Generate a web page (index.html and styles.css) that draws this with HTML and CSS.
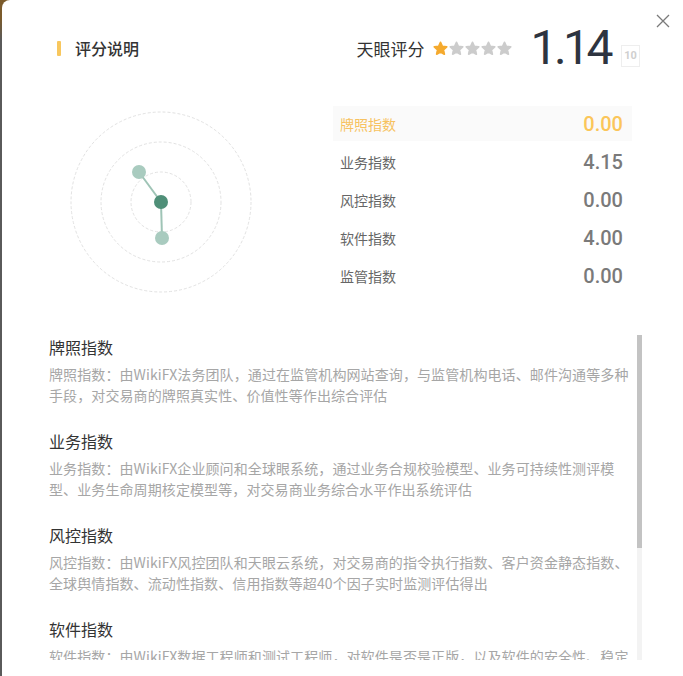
FILE: index.html
```html
<!DOCTYPE html>
<html lang="zh-CN">
<head>
<meta charset="utf-8">
<title>评分说明</title>
<link rel="stylesheet" href="styles.css">
</head>
<body>
<div class="modal">
  <button class="close" aria-label="关闭">
    <svg width="14" height="14" viewBox="0 0 14 14"><path d="M1 1 L13 13 M13 1 L1 13" stroke="#7a7a7a" stroke-width="1.3" fill="none"/></svg>
  </button>
  <div class="header">
    <div class="title"><span class="bar"></span>评分说明</div>
    <div class="score">
      <span class="score-label">天眼评分</span>
      <span class="stars">
        <svg class="star on" viewBox="0 0 14 14"><path d="M7 1.3 L8.7 5 L12.8 5.4 L9.7 8.2 L10.6 12.3 L7 10.2 L3.4 12.3 L4.3 8.2 L1.2 5.4 L5.3 5 Z"/></svg>
        <svg class="star" viewBox="0 0 14 14"><path d="M7 1.3 L8.7 5 L12.8 5.4 L9.7 8.2 L10.6 12.3 L7 10.2 L3.4 12.3 L4.3 8.2 L1.2 5.4 L5.3 5 Z"/></svg>
        <svg class="star" viewBox="0 0 14 14"><path d="M7 1.3 L8.7 5 L12.8 5.4 L9.7 8.2 L10.6 12.3 L7 10.2 L3.4 12.3 L4.3 8.2 L1.2 5.4 L5.3 5 Z"/></svg>
        <svg class="star" viewBox="0 0 14 14"><path d="M7 1.3 L8.7 5 L12.8 5.4 L9.7 8.2 L10.6 12.3 L7 10.2 L3.4 12.3 L4.3 8.2 L1.2 5.4 L5.3 5 Z"/></svg>
        <svg class="star" viewBox="0 0 14 14"><path d="M7 1.3 L8.7 5 L12.8 5.4 L9.7 8.2 L10.6 12.3 L7 10.2 L3.4 12.3 L4.3 8.2 L1.2 5.4 L5.3 5 Z"/></svg>
      </span>
      <span class="big">1.14</span>
      <span class="max">10</span>
    </div>
  </div>

  <div class="top">
    <svg class="radar" width="184" height="184" viewBox="0 0 184 184">
      <circle cx="92" cy="92" r="90" fill="none" stroke="#e2e2e2" stroke-width="1" stroke-dasharray="3 2"/>
      <circle cx="92" cy="92" r="60" fill="none" stroke="#e2e2e2" stroke-width="1" stroke-dasharray="3 2"/>
      <circle cx="92" cy="92" r="30" fill="none" stroke="#e2e2e2" stroke-width="1" stroke-dasharray="3 2"/>
      <line x1="92" y1="92" x2="70" y2="62" stroke="#9fc4b6" stroke-width="2"/>
      <line x1="92" y1="92" x2="93" y2="128" stroke="#9fc4b6" stroke-width="2"/>
      <circle cx="70" cy="62" r="7" fill="#a9cbbf"/>
      <circle cx="93" cy="128" r="7" fill="#a9cbbf"/>
      <circle cx="92" cy="92" r="7" fill="#4f8f78"/>
    </svg>
    <ul class="index-list">
      <li class="row active"><span class="lbl">牌照指数</span><span class="val">0.00</span></li>
      <li class="row"><span class="lbl">业务指数</span><span class="val">4.15</span></li>
      <li class="row"><span class="lbl">风控指数</span><span class="val">0.00</span></li>
      <li class="row"><span class="lbl">软件指数</span><span class="val">4.00</span></li>
      <li class="row"><span class="lbl">监管指数</span><span class="val">0.00</span></li>
    </ul>
  </div>

  <div class="desc-wrap">
    <div class="desc">
      <div class="sec">
        <h3>牌照指数</h3>
        <p>牌照指数：由WikiFX法务团队，通过在监管机构网站查询，与监管机构电话、邮件沟通等多种手段，对交易商的牌照真实性、价值性等作出综合评估</p>
      </div>
      <div class="sec">
        <h3>业务指数</h3>
        <p>业务指数：由WikiFX企业顾问和全球眼系统，通过业务合规校验模型、业务可持续性测评模型、业务生命周期核定模型等，对交易商业务综合水平作出系统评估</p>
      </div>
      <div class="sec">
        <h3>风控指数</h3>
        <p>风控指数：由WikiFX风控团队和天眼云系统，对交易商的指令执行指数、客户资金静态指数、全球舆情指数、流动性指数、信用指数等超40个因子实时监测评估得出</p>
      </div>
      <div class="sec">
        <h3>软件指数</h3>
        <p>软件指数：由WikiFX数据工程师和测试工程师，对软件是否是正版，以及软件的安全性、稳定性、流畅性等进行测试评估得出</p>
      </div>
      <div class="sec">
        <h3>监管指数</h3>
        <p>监管指数：由WikiFX监管团队，根据交易商所持牌照的监管机构级别、监管状态及合规情况等作出综合评估</p>
      </div>
    </div>
    <div class="track"><div class="thumb"></div></div>
  </div>
</div>
</body>
</html>
```

FILE: styles.css
```css
html, body {
  margin: 0;
  padding: 0;
  height: 100%;
  overflow: hidden;
}
body {
  background: linear-gradient(to bottom, #7b5b2b 0, #7b5b2b 18px, #5a5a5a 40px, #5a5a5a 100%);
  font-family: "Noto Sans CJK SC", "Noto Sans", sans-serif;
}
.modal {
  position: relative;
  margin-left: 2px;
  width: 681px;
  height: 720px;
  background: #fff;
  border-top-left-radius: 8px;
}
.close {
  position: absolute;
  top: 14px;
  right: 13px;
  width: 14px;
  height: 14px;
  padding: 0;
  border: 0;
  background: none;
  cursor: pointer;
}
.close svg { display: block; }

.header {
  display: flex;
  align-items: center;
  height: 48px;
  padding: 24px 43px 0 55px;
}
.title {
  display: flex;
  align-items: center;
  font-size: 16px;
  font-weight: 500;
  color: #333;
}
.bar {
  width: 4px;
  height: 15px;
  background: #f8c75e;
  border-radius: 1px;
  margin-right: 14px;
}
.score {
  margin-left: auto;
  display: flex;
  align-items: center;
}
.score-label {
  font-size: 17px;
  color: #333;
}
.stars {
  display: flex;
  gap: 1px;
  margin-left: 9px;
}
.star {
  width: 15px;
  height: 15px;
  fill: #cccccc;
  stroke: #cccccc;
  stroke-width: 1.6;
  stroke-linejoin: round;
}
.star.on { fill: #f5aa2e; stroke: #f5aa2e; }
.big {
  margin-left: 18px;
  font-family: "Roboto", sans-serif;
  font-size: 48px;
  line-height: 50px;
  color: #2e3440;
  letter-spacing: -3.5px;
}
.max {
  align-self: flex-end;
  margin-left: 11px;
  margin-bottom: 6px;
  width: 17px;
  height: 20px;
  border: 1px solid #eeeeee;
  font-family: "Roboto", sans-serif;
  font-size: 11px;
  font-weight: 700;
  line-height: 20px;
  text-align: center;
  color: #cfcfcf;
}

.top {
  display: flex;
  margin-top: 34px;
  padding-left: 67px;
}
.radar {
  display: block;
  margin-top: 4px;
  flex: none;
}
.index-list {
  list-style: none;
  margin: 0 0 0 80px;
  padding: 0;
  width: 299px;
  display: flex;
  flex-direction: column;
  gap: 3px;
}
.row {
  height: 35px;
  display: flex;
  align-items: center;
  justify-content: space-between;
  padding: 0 9px 0 7px;
}
.row.active { background: #fafafa; }
.lbl {
  font-size: 14px;
  color: #666;
}
.val {
  font-family: "Roboto", sans-serif;
  font-size: 20px;
  font-weight: 500;
  color: #7a7a7a;
}
.row.active .lbl { color: #f7c260; }
.row.active .val { color: #fbc65a; }

.desc-wrap {
  display: flex;
  margin: 41px 0 0 31px;
  width: 609px;
  height: 325px;
}
.desc {
  flex: 1;
  min-width: 0;
  padding-left: 16px;
  overflow: hidden;
}
.track {
  width: 5px;
  flex: none;
  background: #f3f3f3;
}
.thumb {
  height: 213px;
  background: #c3c3c3;
}
.sec { margin-bottom: 23px; }
.sec h3 {
  margin: 0;
  font-size: 16px;
  font-weight: 400;
  line-height: 24px;
  color: #333;
}
.sec p {
  margin: 5px 0 0;
  font-size: 14px;
  line-height: 21px;
  letter-spacing: 0.1px;
  color: #a6a6a6;
}
```
